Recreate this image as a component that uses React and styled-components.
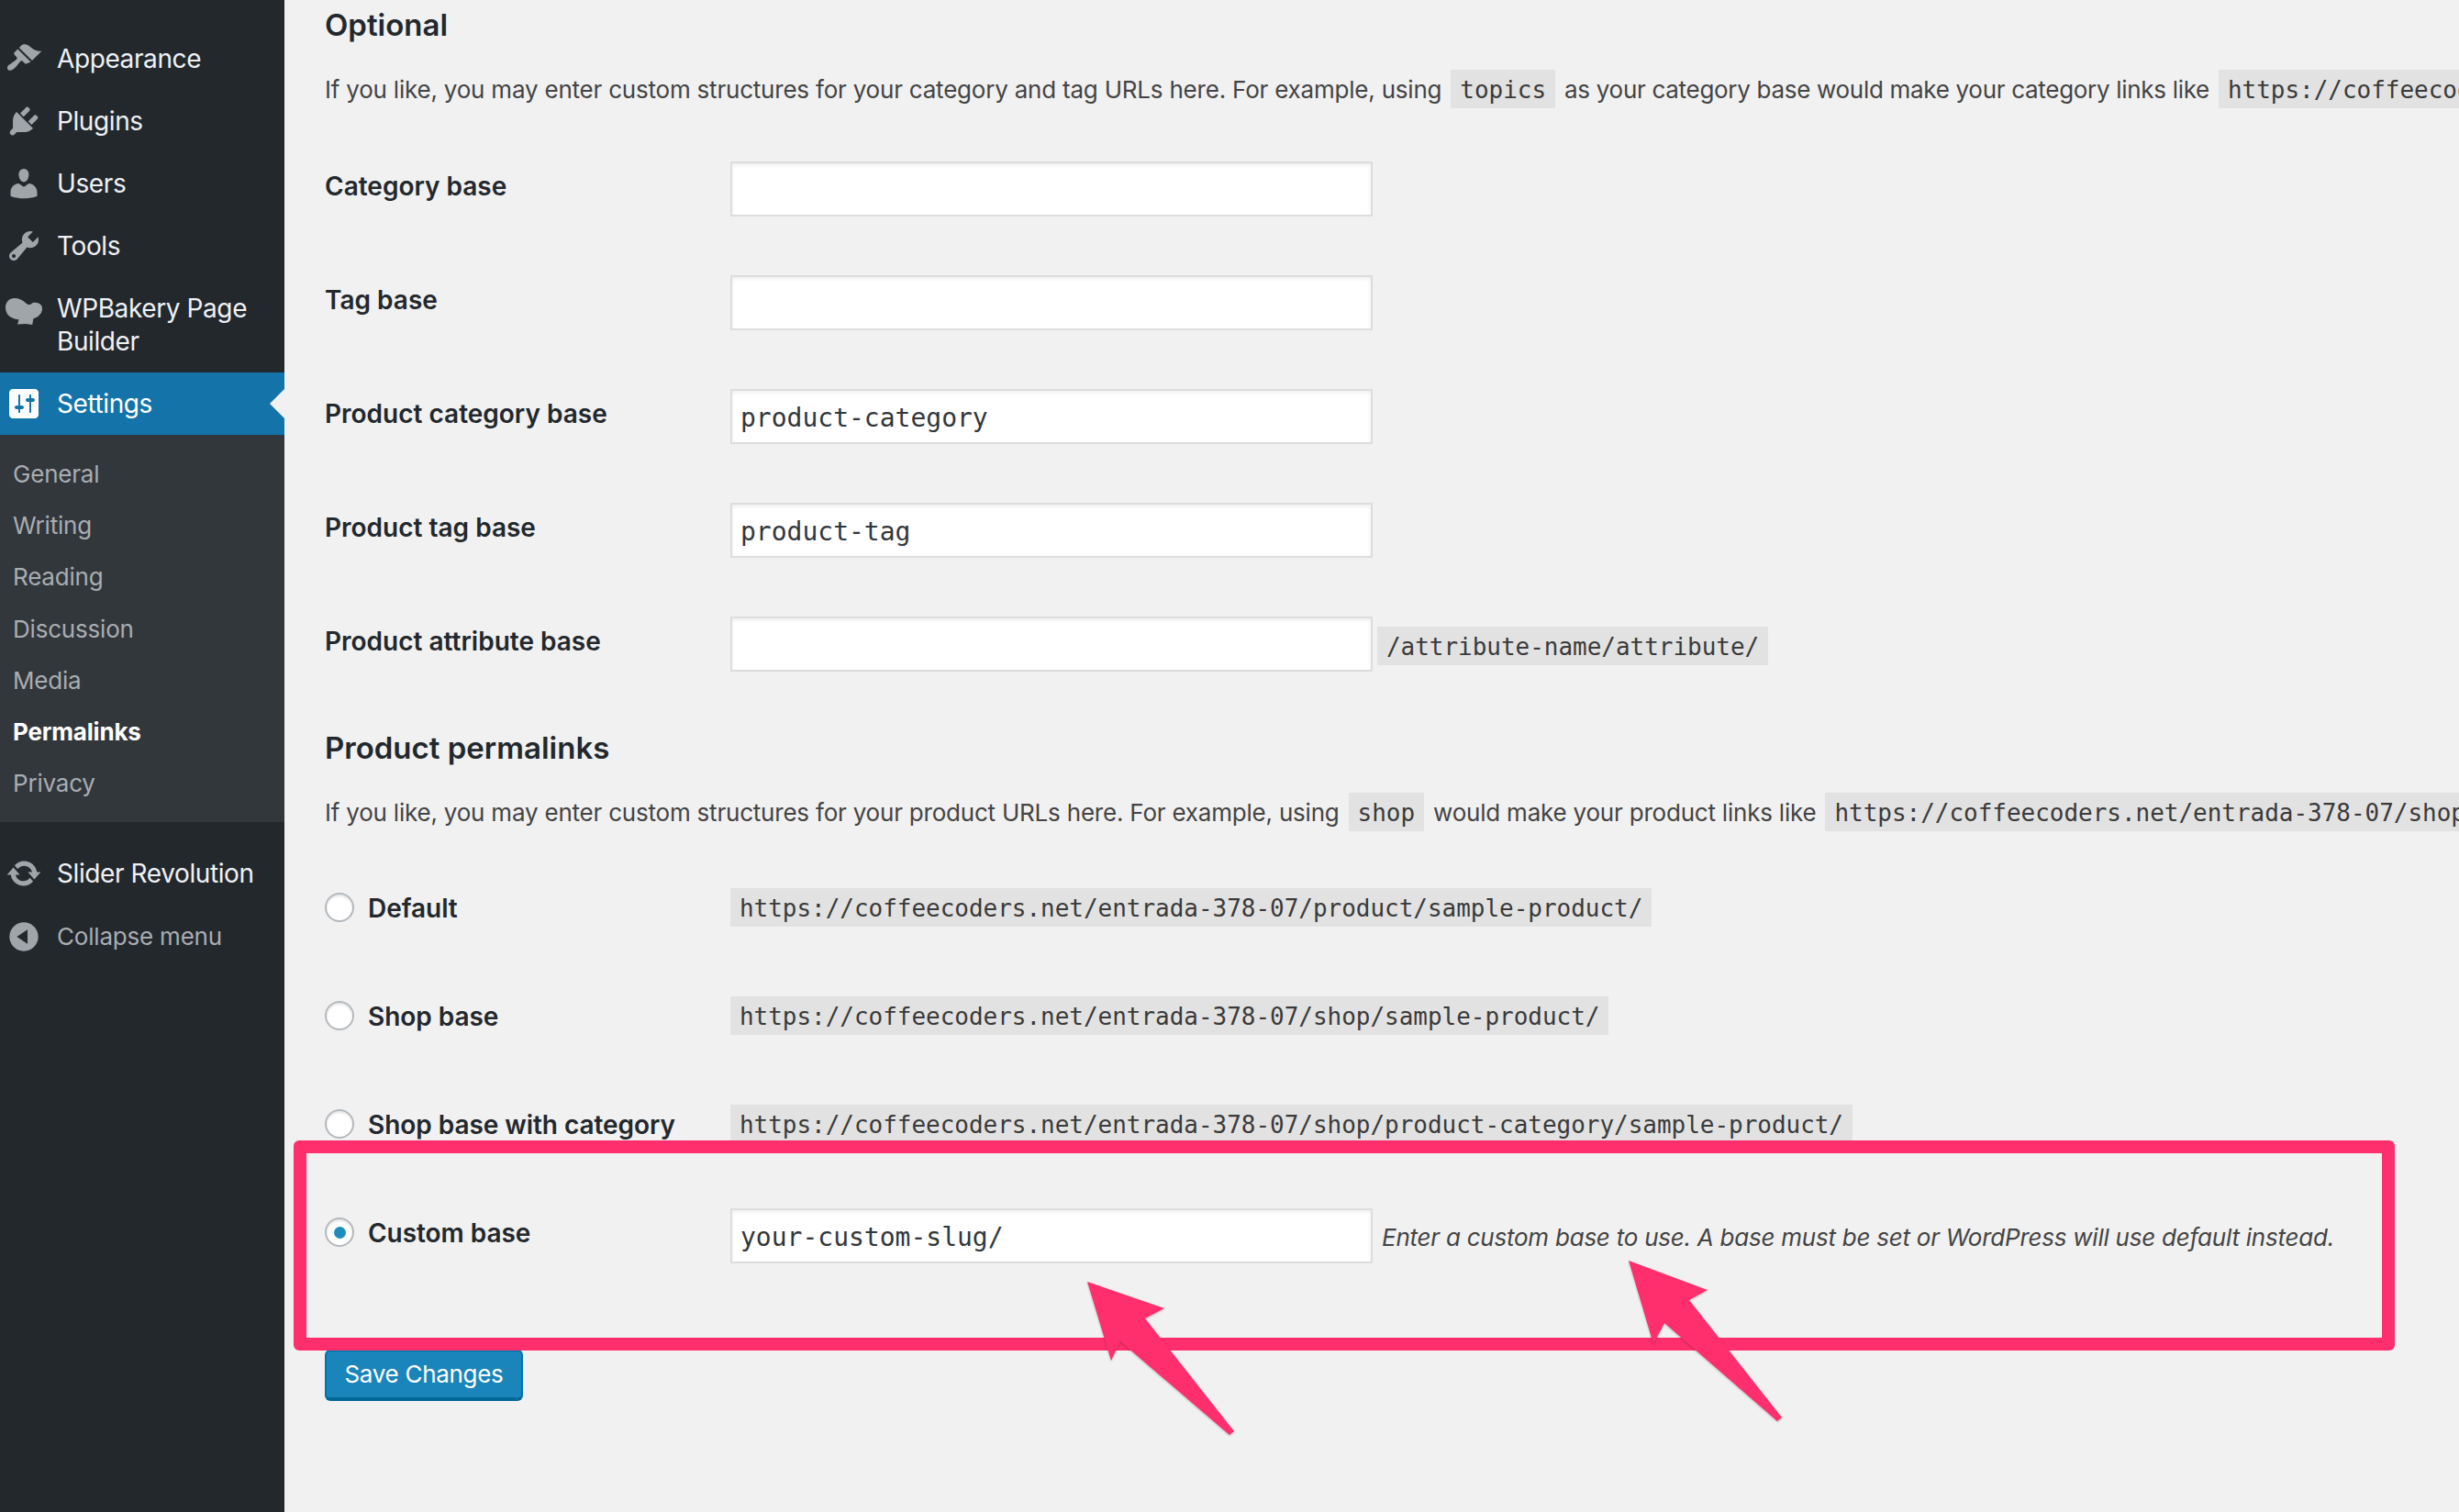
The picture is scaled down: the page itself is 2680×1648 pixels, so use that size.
import React from 'react'
import styled, { createGlobalStyle } from 'styled-components'

const SANS = `Inter, 'Liberation Sans', sans-serif`
const MONO = `'DejaVu Sans Mono', 'Liberation Mono', monospace`

const GlobalStyle = createGlobalStyle`
  html, body {
    margin: 0;
    padding: 0;
    background: #f1f1f1;
  }
  * { box-sizing: border-box; }
`

const ICONS = {
  appearance: 'M14.48 11.06L7.41 3.99l1.5-1.5c.5-.56 2.3-.47 3.51.32 1.21.8 1.43 1.28 2.91 2.1 1.18.64 2.45 1.26 4.45.85zm-.71.71L6.7 4.7 4.93 6.47c-.39.39-.39 1.02 0 1.41l1.06 1.06c.39.39.39 1.03 0 1.42-.6.6-1.43 1.11-2.21 1.69-.35.26-.7.53-1.01.84C1.43 13.23.4 14.98 1.43 16s2.76-.02 4.08-1.34c.31-.31.58-.66.85-1.01.57-.78 1.08-1.61 1.69-2.21.39-.39 1.02-.39 1.41 0l1.06 1.06c.39.39 1.02.39 1.41 0z',
  plugins: 'M13.11 4.36L9.87 7.6 8 5.73l3.24-3.24c.35-.34 1.05-.2 1.56.32.52.51.66 1.21.31 1.55zm-8 1.77l.91-1.12 9.01 9.01-1.19.84c-.71.71-2.63 1.16-3.82 1.16H6.14L4.9 17.26c-.59.59-1.54.59-2.12 0-.59-.58-.59-1.53 0-2.12l1.24-1.24v-3.88c0-1.13.4-3.19 1.09-3.89zm7.26 3.97l3.24-3.24c.34-.35 1.04-.21 1.55.31.52.51.66 1.21.31 1.55l-3.24 3.25z',
  users: 'M10 9.25c-2.27 0-2.73-3.44-2.73-3.44C7 4.02 7.82 2 9.97 2c2.16 0 2.98 2.02 2.71 3.81 0 0-.41 3.44-2.68 3.44zm0 2.57L12.72 10c2.39 0 4.52 2.33 4.52 4.53v2.49s-3.65 1.13-7.24 1.13c-3.65 0-7.24-1.13-7.24-1.13v-2.49c0-2.25 1.94-4.48 4.47-4.48z',
  tools: 'M16.68 9.77c-1.34 1.34-3.3 1.67-4.95.99l-5.41 6.52c-.99.99-2.59.99-3.58 0s-.99-2.59 0-3.57l6.52-5.42c-.68-1.65-.35-3.61.99-4.95 1.28-1.28 3.12-1.62 4.72-1.06l-2.89 2.89 2.82 2.82 2.86-2.87c.53 1.58.18 3.39-1.08 4.65zM3.81 16.21c.4.39 1.04.39 1.43 0 .4-.4.4-1.04 0-1.43-.39-.4-1.03-.4-1.43 0-.39.39-.39 1.03 0 1.43z',
  bakery: 'M0 7.5C0 4.5 2.2 2.5 4.8 2.5c2.6 0 4.6 1 6.2 2.6.8.8 1.6 1 2.5.9 1-1 2-1.2 3.5-1 2 .3 3 1.5 3 3.2 0 2-1.3 3.6-3.2 4.8l-1.6.6-.6 3.4-3.5-.5-4.6.2.8-2.6c-2 0-3.5-.6-5-1.6C1 11.5 0 9.7 0 7.5z',
  settings: 'M18 16V4c0-1.1-.9-2-2-2H4c-1.1 0-2 .9-2 2v12c0 1.1.9 2 2 2h12c1.1 0 2-.9 2-2zM8 11h1c.55 0 1 .45 1 1s-.45 1-1 1H8v1.5c0 .28-.22.5-.5.5s-.5-.22-.5-.5V13H6c-.55 0-1-.45-1-1s.45-1 1-1h1V5.5c0-.28.22-.5.5-.5s.5.22.5.5V11zm5-2h-1c-.55 0-1-.45-1-1s.45-1 1-1h1V5.5c0-.28.22-.5.5-.5s.5.22.5.5V7h1c.55 0 1 .45 1 1s-.45 1-1 1h-1v5.5c0 .28-.22.5-.5.5s-.5-.22-.5-.5V9z',
  update: 'M10.2 3.28c3.53 0 6.43 2.61 6.92 6h2.08l-3.5 4-3.5-4h2.32c-.45-1.97-2.21-3.45-4.32-3.45-1.45 0-2.73.71-3.54 1.78L4.95 5.66C6.23 4.2 8.11 3.28 10.2 3.28zm-.4 13.44c-3.52 0-6.43-2.61-6.92-6H.8l3.5-4c1.17 1.33 2.33 2.67 3.5 4H5.48c.45 1.97 2.21 3.45 4.32 3.45 1.45 0 2.73-.71 3.54-1.78l1.71 1.95c-1.28 1.46-3.15 2.38-5.25 2.38z',
  collapse: 'M10 2.16c4.33 0 7.84 3.51 7.84 7.84s-3.51 7.84-7.84 7.84S2.16 14.33 2.16 10 5.71 2.16 10 2.16zm2 11.72V6.12L6.18 9.97z',
}

const Page = styled.div`
  position: relative;
  display: flex;
  width: 2680px;
  height: 1648px;
  overflow: hidden;
  background: #f1f1f1;
  font-family: ${SANS};
`

const Sidebar = styled.nav`
  flex: 0 0 310px;
  padding-top: 30px;
  background: #23282d;
`

const MenuItem = styled.div`
  position: relative;
  display: flex;
  align-items: ${(props) => props.$twoLines ? 'flex-start' : 'center'};
  padding: 16px 0 16px 6px;
  background: ${(props) => props.$active ? '#1474aa' : 'transparent'};
  color: ${(props) => props.$muted ? '#a9adb1' : props.$active ? '#fff' : '#eef1f4'};
  font-size: ${(props) => props.$muted ? 26 : 28}px;
  letter-spacing: ${(props) => props.$muted ? -0.2 : -0.4}px;
  line-height: ${(props) => props.$muted ? 38 : 36}px;
`

const MenuIcon = styled.svg`
  flex: 0 0 40px;
  width: 40px;
  height: 40px;
  margin: ${(props) => props.$twoLines ? '2px 16px -6px 0' : '-2px 16px -2px 0'};
  fill: ${(props) => props.$active ? '#fff' : '#a0a5aa'};
`

const CurrentArrow = styled.span`
  position: absolute;
  right: 0;
  top: 18px;
  border: 16px solid transparent;
  border-left: 0;
  border-right-color: #f1f1f1;
`

const SubMenu = styled.div`
  padding: 15px 0 14px;
  margin-bottom: 22px;
  background: #32373c;
`

const SubItem = styled.div`
  padding-left: 14px;
  height: 56.2px;
  line-height: 56px;
  font-size: 26px;
  letter-spacing: -0.2px;
  font-weight: ${(props) => props.$current ? 700 : 400};
  color: ${(props) => props.$current ? '#fff' : '#a9adb2'};
`

const Main = styled.main`
  flex: 1;
  min-width: 0;
  padding-left: 44px;
`

const Heading = styled.h2`
  margin: ${(props) => props.$top}px 0 0;
  font-size: 33px;
  line-height: 54px;
  font-weight: 600;
  color: #23282d;
`

const Intro = styled.p`
  margin: 22px 0 0;
  font-size: 26px;
  line-height: 44px;
  height: 42px;
  letter-spacing: -0.21px;
  color: #444;
  white-space: nowrap;
`

const TightPhrase = styled.span`
  letter-spacing: -0.3px;
`

const Code = styled.code`
  display: inline-block;
  height: 42px;
  margin: 0 ${(props) => props.$gap || 0}px;
  padding: 0 10px;
  background: #e2e2e2;
  font-family: ${MONO};
  font-size: 26px;
  line-height: 44px;
  letter-spacing: -0.03px;
  color: #3a3a3a;
  white-space: nowrap;
`

const Fields = styled.div`
  display: flex;
  flex-direction: column;
  gap: 64px;
  margin-top: 58px;
`

const Field = styled.div`
  display: flex;
  align-items: center;
  height: 60px;
`

const FieldLabel = styled.label`
  flex: 0 0 442px;
  padding-bottom: 7px;
  font-size: 28px;
  font-weight: 600;
  color: #23282d;
`

const TextInput = styled.input`
  width: 700px;
  height: 60px;
  padding: 3px 9px 0;
  border: 2px solid #ddd;
  border-radius: 0;
  outline: 0;
  background: #fff;
  box-shadow: inset 0 2px 4px rgba(0, 0, 0, 0.07);
  font-family: ${MONO};
  font-size: 28px;
  color: #32373c;
`

const Suffix = styled(Code)`
  margin-left: 5px;
  margin-top: 4px;
`

const RadioRows = styled.div`
  display: flex;
  flex-direction: column;
  gap: 76px;
  margin-top: 62px;
`

const RadioRow = styled.div`
  display: flex;
  align-items: center;
  height: ${(props) => props.$tall ? 60 : 42}px;
  margin-top: ${(props) => props.$tall ? -5 : 0}px;
`

const RadioLabel = styled.label`
  display: flex;
  flex: 0 0 442px;
  align-items: center;
  gap: 15px;
  padding-bottom: ${(props) => props.$tall ? 8 : 0}px;
  font-size: 28px;
  line-height: 36px;
  font-weight: 600;
  letter-spacing: -0.05px;
  color: #23282d;
`

const LabelText = styled.span`
  position: relative;
  top: 1px;
`

const Radio = styled.input`
  appearance: none;
  display: flex;
  align-items: center;
  justify-content: center;
  flex: 0 0 32px;
  width: 32px;
  height: 32px;
  margin: 0;
  border: 2px solid #b4b9be;
  border-radius: 50%;
  background: #fff;
  box-shadow: inset 0 2px 2px rgba(0, 0, 0, 0.1);

  &:checked::before {
    content: '';
    width: 13px;
    height: 13px;
    border-radius: 50%;
    background: #1e8cbe;
  }
`

const Description = styled.span`
  margin: 2px 0 0 10px;
  font-size: 26px;
  font-style: italic;
  letter-spacing: -0.24px;
  color: #444;
  white-space: nowrap;
`

const SaveButton = styled.button`
  display: block;
  width: 216px;
  height: 56px;
  margin-top: 94px;
  padding: 0 0 2px;
  border: 2px solid #0073aa;
  border-bottom-width: 4px;
  border-bottom-color: #006799;
  border-radius: 6px;
  background: #1a85ba;
  font-family: ${SANS};
  font-size: 26px;
  letter-spacing: -0.3px;
  color: #fff;
`

const HighlightBox = styled.div`
  position: absolute;
  left: 320px;
  top: 1243px;
  width: 2290px;
  height: 229px;
  border: 14px solid #ff2f6e;
  border-radius: 6px;
`

const ArrowLayer = styled.svg`
  position: absolute;
  left: 0;
  top: 0;
  width: 2680px;
  height: 1648px;
  fill: #ff2f6e;
  filter: drop-shadow(0 1px 1px rgba(0, 0, 0, 0.25));
  pointer-events: none;
`

function Icon ({ name, active, twoLines }) {
  return (
    <MenuIcon viewBox='0 0 20 20' $active={active} $twoLines={twoLines}>
      <path d={ICONS[name]} />
    </MenuIcon>
  )
}

const TOP_ITEMS = [
  ['appearance', 'Appearance'],
  ['plugins', 'Plugins'],
  ['users', 'Users'],
  ['tools', 'Tools'],
]

const SUB_ITEMS = ['General', 'Writing', 'Reading', 'Discussion', 'Media', 'Permalinks', 'Privacy']

const BASE_FIELDS = [
  ['Category base', ''],
  ['Tag base', ''],
  ['Product category base', 'product-category'],
  ['Product tag base', 'product-tag'],
]

const PERMALINKS = [
  ['Default', 'https://coffeecoders.net/entrada-378-07/product/sample-product/'],
  ['Shop base', 'https://coffeecoders.net/entrada-378-07/shop/sample-product/'],
  ['Shop base with category', 'https://coffeecoders.net/entrada-378-07/shop/product-category/sample-product/'],
]

export default function App () {
  return (
    <Page>
      <GlobalStyle />

      <Sidebar>
        {TOP_ITEMS.map(([icon, label]) => (
          <MenuItem key={label}><Icon name={icon} />{label}</MenuItem>
        ))}
        <MenuItem $twoLines><Icon name='bakery' twoLines /><span>WPBakery Page<br />Builder</span></MenuItem>
        <MenuItem $active>
          <Icon name='settings' active />Settings
          <CurrentArrow />
        </MenuItem>
        <SubMenu>
          {SUB_ITEMS.map((label) => (
            <SubItem key={label} $current={label === 'Permalinks'}>{label}</SubItem>
          ))}
        </SubMenu>
        <MenuItem><Icon name='update' />Slider Revolution</MenuItem>
        <MenuItem $muted><Icon name='collapse' />Collapse menu</MenuItem>
      </Sidebar>

      <Main>
        <Heading $top={0}>Optional</Heading>
        <Intro>
          If you like, you may enter custom structures for your category and tag URLs here. For example, using
          <Code $gap={10}>topics</Code>
          <TightPhrase>as your category base would make your category links like</TightPhrase>
          <Code $gap={10}>https://coffeecoders.net/entrada-378-07/product-category/uncategorized/</Code>
        </Intro>

        <Fields>
          {BASE_FIELDS.map(([label, value]) => (
            <Field key={label}>
              <FieldLabel>{label}</FieldLabel>
              <TextInput readOnly value={value} />
            </Field>
          ))}
          <Field>
            <FieldLabel>Product attribute base</FieldLabel>
            <TextInput readOnly value='' />
            <Suffix>/attribute-name/attribute/</Suffix>
          </Field>
        </Fields>

        <Heading $top={56}>Product permalinks</Heading>
        <Intro>
          If you like, you may enter custom structures for your product URLs here. For example, using
          <Code $gap={10}>shop</Code>
          would make your product links like
          <Code $gap={10}>https://coffeecoders.net/entrada-378-07/shop/sample-product/</Code>
        </Intro>

        <RadioRows>
          {PERMALINKS.map(([label, url]) => (
            <RadioRow key={label}>
              <RadioLabel><Radio type='radio' name='permalink' /><LabelText>{label}</LabelText></RadioLabel>
              <Code>{url}</Code>
            </RadioRow>
          ))}
          <RadioRow $tall>
            <RadioLabel $tall><Radio type='radio' name='permalink' defaultChecked /><LabelText>Custom base</LabelText></RadioLabel>
            <TextInput readOnly value='your-custom-slug/' />
            <Description>Enter a custom base to use. A base must be set or WordPress will use default instead.</Description>
          </RadioRow>
        </RadioRows>

        <SaveButton>Save Changes</SaveButton>
      </Main>

      <HighlightBox />
      <ArrowLayer viewBox='0 0 2680 1648'>
        <polygon points='1185,1397 1269,1426 1248,1437 1345,1560 1340,1564 1221,1462 1211,1483' />
        <polygon points='1775,1374 1861,1406 1841,1417 1942,1545 1937,1549 1814,1442 1802,1465' />
      </ArrowLayer>
    </Page>
  )
}
